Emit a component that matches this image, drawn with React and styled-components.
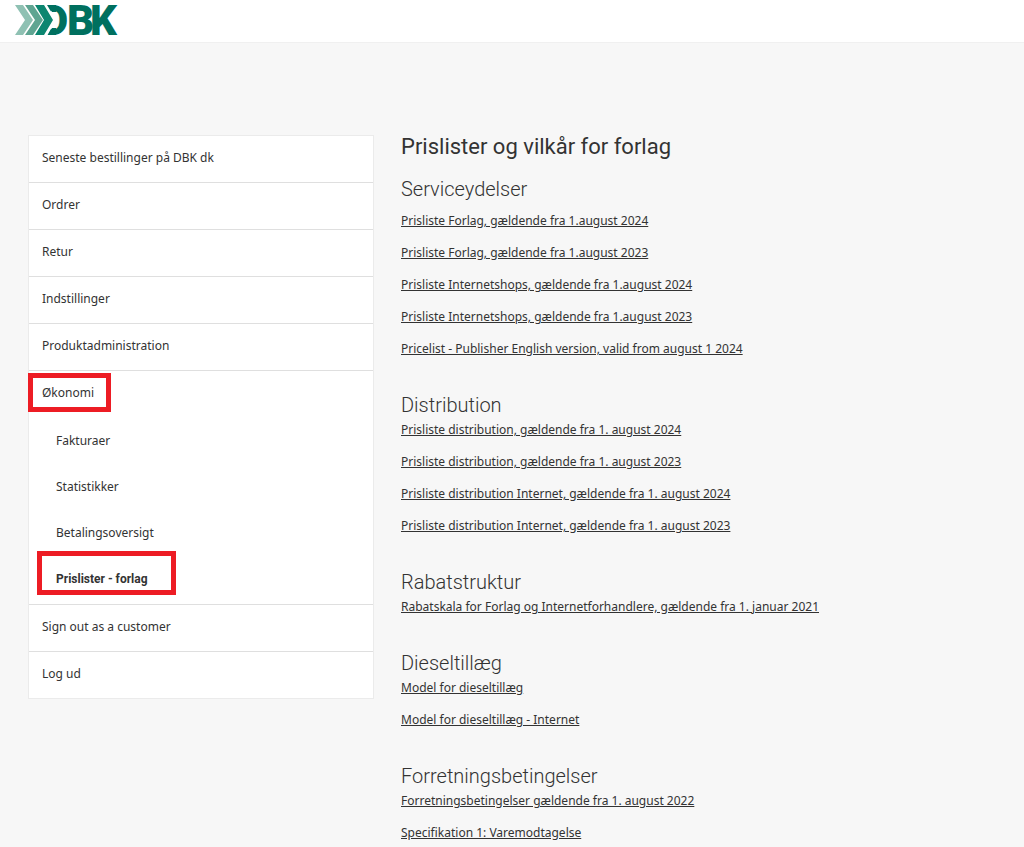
import React from "react";
import styled, { createGlobalStyle, css } from "styled-components";

const GlobalStyle = createGlobalStyle`
  *, *::before, *::after { box-sizing: border-box; }
  body {
    margin: 0;
    background: #f7f7f7;
    color: #333;
    font-family: "Noto Sans", "Open Sans", sans-serif;
    font-size: 12px;
    line-height: 16px;
  }
  ul { list-style: none; margin: 0; padding: 0; }
`;

const Header = styled.header`
  display: flex;
  align-items: flex-start;
  height: 43px;
  padding: 5px 14px;
  background: #fff;
  border-bottom: 1px solid #f0f0f0;
`;

const HomeLink = styled.a`
  display: block;
  line-height: 0;
`;

const Columns = styled.div`
  display: grid;
  grid-template-columns: minmax(0, 346fr) minmax(0, 595fr);
  column-gap: 27px;
  align-items: start;
  padding: 92px 28px 0;
`;

const Sidebar = styled.nav`
  background: #fff;
  border: 1px solid #ebebeb;
`;

const MenuItem = styled.li`
  & + & { border-top: 1px solid #dfdfdf; }
`;

const marked = css`
  &::after {
    content: "";
    position: absolute;
    inset: ${(p) => p.$mark};
    border: 5px solid #ed1c24;
    pointer-events: none;
  }
`;

const MenuLink = styled.a`
  position: relative;
  display: block;
  width: fit-content;
  padding: 14px 13px 16px;
  color: inherit;
  text-decoration: none;
  ${(p) => p.$mark && marked}
`;

const SubMenu = styled.ul`
  padding: 2px 0 1px 14px;
`;

const SubLink = styled(MenuLink)`
  ${(p) => p.$current && css`
    font-family: Roboto, sans-serif;
    font-weight: 700;
  `}
`;

const Content = styled.main`
  min-width: 0;
`;

const Title = styled.h1`
  margin: 0 0 18px;
  font-family: Roboto, sans-serif;
  font-size: 22px;
  line-height: 24px;
  font-weight: 400;
`;

const Section = styled.section`
  margin-bottom: 36px;
`;

const SectionTitle = styled.h2`
  margin: 0 0 ${(p) => (p.$first ? 12 : 5)}px;
  font-family: Roboto, sans-serif;
  font-size: 20px;
  line-height: 24px;
  font-weight: 300;
`;

const LinkList = styled.ul`
  display: flex;
  flex-direction: column;
  align-items: flex-start;
  gap: 16px;
`;

const DocLink = styled.a`
  display: block;
  color: inherit;
  text-decoration: underline;
  text-underline-offset: 1px;
`;

const menu = [
  { label: "Seneste bestillinger på DBK dk" },
  { label: "Ordrer" },
  { label: "Retur" },
  { label: "Indstillinger" },
  { label: "Produktadministration" },
  {
    label: "Økonomi",
    mark: "2px -4px 5px -1px",
    children: [
      { label: "Fakturaer" },
      { label: "Statistikker" },
      { label: "Betalingsoversigt" },
      { label: "Prislister - forlag", current: true, mark: "-6px -15px 8px -6px" },
    ],
  },
  { label: "Sign out as a customer" },
  { label: "Log ud" },
];

const sections = [
  {
    title: "Serviceydelser",
    links: [
      "Prisliste Forlag, gældende fra 1.august 2024",
      "Prisliste Forlag, gældende fra 1.august 2023",
      "Prisliste Internetshops, gældende fra 1.august 2024",
      "Prisliste Internetshops, gældende fra 1.august 2023",
      "Pricelist - Publisher English version, valid from august 1 2024",
    ],
  },
  {
    title: "Distribution",
    links: [
      "Prisliste distribution, gældende fra 1. august 2024",
      "Prisliste distribution, gældende fra 1. august 2023",
      "Prisliste distribution Internet, gældende fra 1. august 2024",
      "Prisliste distribution Internet, gældende fra 1. august 2023",
    ],
  },
  {
    title: "Rabatstruktur",
    links: ["Rabatskala for Forlag og Internetforhandlere, gældende fra 1. januar 2021"],
  },
  {
    title: "Dieseltillæg",
    links: ["Model for dieseltillæg", "Model for dieseltillæg - Internet"],
  },
  {
    title: "Forretningsbetingelser",
    links: [
      "Forretningsbetingelser gældende fra 1. august 2022",
      "Specifikation 1: Varemodtagelse",
    ],
  },
];

function Logo() {
  return (
    <svg width="120" height="31" viewBox="0 0 120 31" role="img" aria-label="DBK" overflow="visible">
      <text
        x="27 53 76"
        y="30"
        fill="#00705f"
        fontFamily="Roboto, sans-serif"
        fontWeight="900"
        fontSize="42"
      >
        DBK
      </text>
      <path d="M20 0H33L42 15L33 31H20Z" fill="#fff" />
      <path d="M34 0H42V7H38Z M34 30H42V23H38Z" fill="#00705f" />
      <path d="M1 0H9L19 15L9 30H1L11 15Z" fill="#8fc1b3" />
      <path d="M11 0H19L29 15L19 30H11L21 15Z" fill="#5fa592" />
      <path d="M21 0H30L39 15L30 30H21L30 15Z" fill="#0c8670" />
    </svg>
  );
}

export default function App() {
  return (
    <>
      <GlobalStyle />
      <Header>
        <HomeLink href="#">
          <Logo />
        </HomeLink>
      </Header>
      <Columns>
        <Sidebar>
          <ul>
            {menu.map((item) => (
              <MenuItem key={item.label}>
                <MenuLink href="#" $mark={item.mark}>{item.label}</MenuLink>
                {item.children && (
                  <SubMenu>
                    {item.children.map((sub) => (
                      <li key={sub.label}>
                        <SubLink
                          href="#"
                          $mark={sub.mark}
                          $current={sub.current}
                          aria-current={sub.current ? "page" : undefined}
                        >
                          {sub.label}
                        </SubLink>
                      </li>
                    ))}
                  </SubMenu>
                )}
              </MenuItem>
            ))}
          </ul>
        </Sidebar>
        <Content>
          <Title>Prislister og vilkår for forlag</Title>
          {sections.map((section, i) => (
            <Section key={section.title}>
              <SectionTitle $first={i === 0}>{section.title}</SectionTitle>
              <LinkList>
                {section.links.map((label) => (
                  <li key={label}>
                    <DocLink href="#">{label}</DocLink>
                  </li>
                ))}
              </LinkList>
            </Section>
          ))}
        </Content>
      </Columns>
    </>
  );
}
